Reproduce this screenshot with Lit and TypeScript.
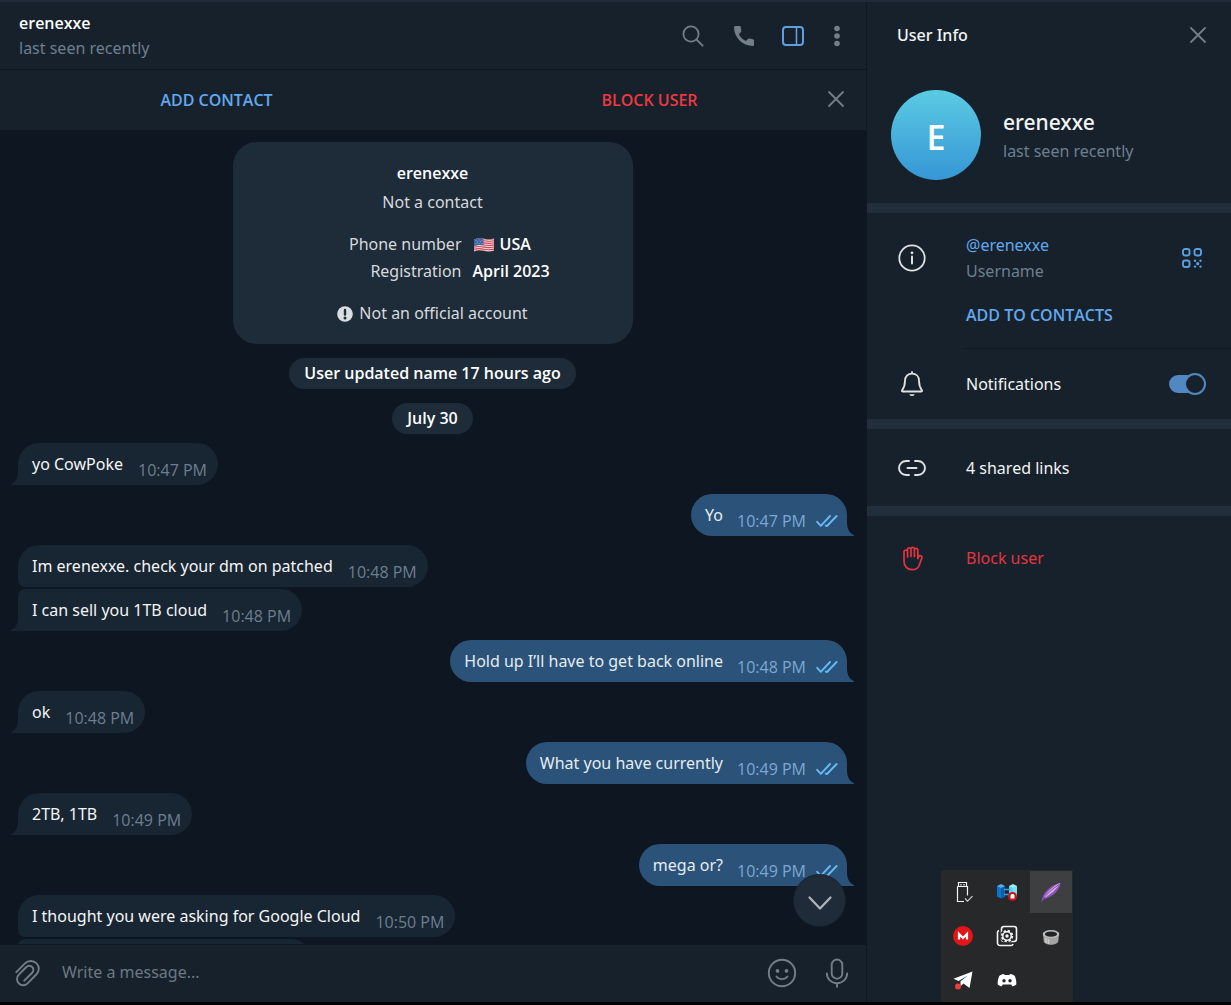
import { LitElement, html, css, svg, nothing } from "lit";
import { customElement, property } from "lit/decorators.js";
import { classMap } from "lit/directives/class-map.js";

type Message = {
  text: string;
  time: string;
  out?: boolean;
  joinsNext?: boolean;
  joinsPrev?: boolean;
};

const MESSAGES: Message[] = [
  { text: "yo CowPoke", time: "10:47 PM" },
  { text: "Yo", time: "10:47 PM", out: true },
  { text: "Im erenexxe. check your dm on patched", time: "10:48 PM", joinsNext: true },
  { text: "I can sell you 1TB cloud", time: "10:48 PM", joinsPrev: true },
  { text: "Hold up I’ll have to get back online", time: "10:48 PM", out: true },
  { text: "ok", time: "10:48 PM" },
  { text: "What you have currently", time: "10:49 PM", out: true },
  { text: "2TB, 1TB", time: "10:49 PM" },
  { text: "mega or?", time: "10:49 PM", out: true },
  { text: "I thought you were asking for Google Cloud", time: "10:50 PM", joinsNext: true },
];

const icon = (w: number, h: number, body: unknown) => html`
  <svg width=${w} height=${h} viewBox="0 0 ${w} ${h}" fill="none" stroke="currentColor"
    stroke-width="2" stroke-linecap="round" stroke-linejoin="round" aria-hidden="true">${body}</svg>`;

const searchIcon = icon(24, 24, svg`
  <circle cx="10" cy="10" r="7.6" stroke-width="1.8"/><path d="M15.6 15.6l6 6"/>`);
const phoneIcon = icon(24, 24, svg`
  <path fill="currentColor" stroke="none" d="M3.6 2h3.800c.7 0 1.200.5 1.300 1.100l.6 3.700c.1.500-.1 1-.4 1.300L6.900 10.200c1.500 3 3.900 5.400 6.900 6.900l2.100-2.100c.4-.4.9-.5 1.400-.4l3.600.7c.7.1 1.100.7 1.100 1.300v4.100c0 .700-.6 1.300-1.300 1.300C10.600 22 2 13.400 2 3.300 2 2.600 2.900 2 3.600 2z"/>`);
const panelIcon = icon(24, 22, svg`
  <rect x="2" y="2" width="20" height="18" rx="3"/><path d="M15.500 2v18" stroke-width="1.600"/>`);
const dotsIcon = icon(6, 22, svg`
  <g fill="currentColor" stroke="none"><circle cx="3" cy="3.500" r="2.800"/><circle cx="3" cy="11" r="2.800"/><circle cx="3" cy="18.500" r="2.800"/></g>`);
const closeIcon = icon(18, 18, svg`<path d="M2 2l14 14M16 2L2 16" stroke-width="1.800"/>`);
const clipIcon = icon(26, 28, svg`
  <path stroke-width="1.900" d="M2.300 13.200L11 4.400a8.100 8.100 0 0 1 11.500 0 7.600 7.600 0 0 1 0 10.900l-8.900 9a6 6 0 0 1-8.800 0 6.100 6.100 0 0 1 0-8.600l7.600-7.700a4 4 0 0 1 5.800 0 4 4 0 0 1 0 5.700l-7.900 8"/>`);
const smileIcon = icon(30, 30, svg`
  <circle cx="15" cy="15" r="13.200" stroke-width="1.900"/>
  <circle cx="10.500" cy="12.900" r="1.900" fill="currentColor" stroke="none"/>
  <circle cx="19.500" cy="12.900" r="1.900" fill="currentColor" stroke="none"/>
  <path d="M9.500 18.500c2.600 3.500 8.400 3.500 11 0" stroke-width="1.800"/>`);
const micIcon = icon(24, 30, svg`
  <rect x="6.700" y="1.500" width="10.600" height="19.200" rx="5.300" stroke-width="1.900"/>
  <path d="M1.900 15.500a10.100 9.700 0 0 0 20.200 0M12 25.200v3.500" stroke-width="1.900"/>`);
const downIcon = icon(26, 16, svg`<path d="M2.500 2.500L13 13.500 23.500 2.500" stroke-width="2.200"/>`);
const infoIcon = icon(28, 28, svg`
  <circle cx="14" cy="14" r="12.700" stroke-width="1.800"/>
  <path d="M14 12.500v7" stroke-width="2"/><circle cx="14" cy="8.800" r="1.400" fill="currentColor" stroke="none"/>`);
const bellIcon = icon(24, 28, svg`
  <path stroke-width="1.800" d="M12 2v1.700M12 3.700c-4.200 0-7 3-7 7.100 0 5.100-1.100 7.100-3 9.700-.3.500-.1 1 .500 1h19c.600 0 .8-.5.5-1-1.900-2.600-3-4.600-3-9.700 0-4.100-2.800-7.100-7-7.100z"/>
  <path d="M9.300 24.200h5.400a2.900 2.900 0 0 1-5.400 0z" fill="currentColor" stroke="none"/>`);
const linkIcon = icon(28, 18, svg`
  <path d="M11 2H8a7 7 0 0 0 0 14h3M17 2h3a7 7 0 0 1 0 14h-3M9.500 9h9" stroke-width="1.900"/>`);
const handIcon = icon(22, 26, svg`
  <path stroke-width="1.700" d="M2 16V6.400a1.900 1.900 0 0 1 3.600 0V12M5.600 6.400V4a1.900 1.900 0 0 1 3.400 0v7.500M9 3.500a1.800 1.800 0 0 1 3.400 0v8M12.400 4.500a1.800 1.800 0 0 1 3.400 0v8.300M15.800 13.500l1.100-2.200c.9-1.300 3.400-.7 3 1.400l-2.700 7.500C16 23.300 13.600 24.700 10.300 24.700 5.300 24.700 2 21.500 2 16"/>`);
const qrIcon = icon(20, 20, svg`
  <g stroke-width="1.900"><rect x="1" y="1" width="6.500" height="6.500" rx="2"/><rect x="12.500" y="1" width="6.500" height="6.500" rx="2"/><rect x="1" y="12.500" width="6.500" height="6.500" rx="2"/></g>
  <g fill="currentColor" stroke="none"><circle cx="13" cy="12.800" r="1.200"/><circle cx="18.500" cy="12.800" r="1.200"/><circle cx="15.700" cy="15.700" r="1.600"/><circle cx="13" cy="18.600" r="1.200"/><circle cx="18.500" cy="18.600" r="1.200"/></g>`);
const checksIcon = icon(22, 14, svg`
  <path d="M1.200 7.800L4.800 11.800 14 2M9.800 11.600L11 12 20.600 2" stroke-width="1.900"/>`);
const flagIcon = html`
  <svg class="flag" width="22" height="16" viewBox="0 0 22 16" aria-hidden="true">
    <defs><clipPath id="wave"><path d="M1 2.500C5 .8 8 1 11 1.800s6 1 10-.3v12c-4 1.300-7 1.100-10 .3s-6-1-10 .7z"/></clipPath></defs>
    <g clip-path="url(#wave)">
      <rect width="22" height="16" fill="#f1dfe2"/>
      <g fill="none" stroke="#cf4455" stroke-width="1.100">
        ${[1.4, 3.5, 5.600, 7.700, 9.800, 11.900, 14].map(
          (y) => svg`<path d="M0 ${y + 0.5}C5 ${y - 0.7} 8 ${y - 0.4} 11 ${y + 0.3}s6 .8 11-.3"/>`
        )}
      </g>
      <path d="M0 0h10.500v8.300C7 7.500 4 7.800 0 9.500z" fill="#3c62a5"/>
      <g fill="#b9cae6"><circle cx="3" cy="3.500" r=".5"/><circle cx="6" cy="3" r=".5"/><circle cx="9" cy="3.200" r=".5"/><circle cx="4.500" cy="5" r=".5"/><circle cx="7.500" cy="4.800" r=".5"/><circle cx="3" cy="6.700" r=".5"/><circle cx="6" cy="6.300" r=".5"/><circle cx="9" cy="6.400" r=".5"/></g>
    </g>
  </svg>`;
const warnIcon = html`
  <svg width="16" height="16" viewBox="0 0 16 16" aria-hidden="true">
    <circle cx="8" cy="8" r="7.800" fill="#dadee2"/>
    <path d="M8 4v4.500" stroke="#1e2c3a" stroke-width="2.400" stroke-linecap="round"/>
    <circle cx="8" cy="11.900" r="1.500" fill="#1e2c3a"/>
  </svg>`;

const tray = (body: unknown) => html`<svg width="24" height="24" viewBox="0 0 24 24" fill="none" aria-hidden="true">${body}</svg>`;
const TRAY = [
  { name: "Safely remove hardware", art: tray(svg`
    <path d="M7.500 6.500V2.500h8v4M6.500 6.500h10v9M6.500 6.500v15h6.500" stroke="#f4f4f4" stroke-width="1.200"/>
    <path d="M10 4v1.500M13 4v1.500" stroke="#f4f4f4" stroke-width="1.200"/>
    <path d="M14 18.500l2.500 2.700 5-5" stroke="#d0d0d0" stroke-width="1.200"/>`) },
  { name: "Backup", art: tray(svg`
    <path d="M2 6v10.500l4 2 4-2V6z" fill="#0c74cf"/><path d="M6 8v10.500l4-2V6z" fill="#0a5fb5"/><path d="M2 6l4-2 4 2-4 2z" fill="#5aa9ee"/>
    <path d="M14 6v10.500l4 2 4-2V6z" fill="#5cd3f2"/><path d="M14 6l4-2 4 2-4 2z" fill="#a4edfb"/><path d="M18 8v9l4-1V6z" fill="#7fe0f6"/>
    <path d="M9 9.500h6M9 14.500h6" stroke="#3aa0d8" stroke-width="1.300"/>
    <circle cx="17.500" cy="16.500" r="4.500" fill="#c4161c"/><path d="M15.500 18.500v-2.500c0-2.600 4-2.600 4 0v2.500z" fill="#fff"/>`) },
  { name: "Feather", art: tray(svg`
    <path d="M2.500 21.500C3.500 13 10 6 21.500 2.500 21 9 16 16 5.500 19z" fill="#8d52b8"/>
    <path d="M5 17C9 11 14 6 21 3c-3 6-9 11-14.500 14.500z" fill="#d7b0ea"/>
    <path d="M2.500 21.500C7 14.500 13 9 20 4.500" stroke="#7d46a8" stroke-width="1"/>`), active: true },
  { name: "Mega", art: tray(svg`
    <circle cx="12" cy="12" r="10" fill="#e4141b"/><path d="M8 15.500V10l4 4 4-4v5.500" stroke="#fff" stroke-width="2.200"/>`) },
  { name: "Capture settings", art: tray(svg`
    <rect x="6.500" y="2.500" width="15" height="15" rx="2.500" stroke="#f4f4f4" stroke-width="1.600"/>
    <path d="M4 6.500A2 2 0 0 0 2.500 8.500V19A2.500 2.500 0 0 0 5 21.500h11a2 2 0 0 0 2-1.500" stroke="#f4f4f4" stroke-width="1.600"/>
    <circle cx="12" cy="12" r="7" fill="#262829"/>
    <circle cx="12" cy="12" r="5.200" stroke="#f4f4f4" stroke-width="2" stroke-dasharray="2.300 1.784"/>
    <circle cx="12" cy="12" r="4.200" stroke="#f4f4f4" stroke-width="1.500"/><circle cx="12" cy="12" r="1.700" fill="#f4f4f4"/>`) },
  { name: "Disk", art: tray(svg`
    <path d="M4 10l.7 7c.5 5 14.100 5 14.600 0L20 10z" fill="#a4a4a4"/><path d="M7 14v5M9.500 15v5" stroke="#cdcdcd" stroke-width="1.500"/>
    <ellipse cx="12" cy="10" rx="8.300" ry="4" fill="#bdbdbd"/><ellipse cx="12" cy="10.200" rx="6" ry="2.600" fill="#232323"/>`) },
  { name: "Messenger", art: tray(svg`
    <path d="M2.500 10.800L21.500 3.500 18.500 20l-6-4.500-3 2.800v-5L17 7.500 7.500 13z" fill="#fff"/>
    <circle cx="7" cy="18.500" r="3" fill="#ea4038"/>`) },
  { name: "Discord", art: tray(svg`
    <path d="M7.500 6.300L9 6l.7 1h4.600l.7-1 1.500.3c2 .500 3 1.200 3.500 2.200 1 2.500 1.500 5 1.300 8-1.500 1.200-3 1.700-4 1.800l-1.100-1.700H7.800L6.700 18.300c-1-.1-2.500-.6-4-1.800-.2-3 .3-5.500 1.300-8 .5-1 1.500-1.700 3.500-2.200z" fill="#fff"/>
    <circle cx="9" cy="12.700" r="1.700" fill="#26282a"/><circle cx="15" cy="12.700" r="1.700" fill="#26282a"/>`) },
];

const shared = css`
  * { box-sizing: border-box; }
  button, input { font: inherit; color: inherit; background: none; border: 0; margin: 0; padding: 0; }
  button { cursor: pointer; display: flex; align-items: center; justify-content: center; }
  svg { display: block; flex: none; }
  h1, h2, p, dl, dd, dt { margin: 0; font-size: inherit; font-weight: inherit; }
  .strong { font-family: "Open Sans", "Noto Sans", sans-serif; font-weight: 600; }
`;

@customElement("chat-bubble")
export class ChatBubble extends LitElement {
  @property({ attribute: false }) message!: Message;

  static styles = [shared, css`
    :host { display: flex; }
    .bubble {
      position: relative; display: flex; align-items: flex-start; gap: 15px; height: 42px;
      padding: 0 11px 0 14px; line-height: 42px; border-radius: 21px;
      background: #182533; color: #f5f5f5; white-space: nowrap;
    }
    .time { font-family: "Open Sans", "Noto Sans", sans-serif; color: #6d7f8f; padding-top: 6px; height: 42px; }
    .bubble.in { border-bottom-left-radius: 0; }
    .bubble.joins-next { border-bottom-left-radius: 7px; }
    .bubble.joins-prev { border-top-left-radius: 7px; }
    .bubble.out { gap: 14px; margin-left: auto; background: #2b5278; color: #e4ecf2; border-bottom-right-radius: 0; padding-right: 9px; }
    .out .time { color: #7da8d3; }
    .checks { color: #65b9f4; margin-left: -4px; padding-top: 20px; }
    .tail { position: absolute; bottom: 0; left: -7px; color: #182533; }
    .out .tail { left: auto; right: -7px; color: #2b5278; transform: scaleX(-1); }
  `];

  render() {
    const m = this.message;
    return html`
      <div class=${classMap({ bubble: true, in: !m.out, out: !!m.out, "joins-next": !!m.joinsNext, "joins-prev": !!m.joinsPrev })}>
        <span>${m.text}</span>
        <time class="time">${m.time}</time>
        ${m.out ? html`<span class="checks">${checksIcon}</span>` : nothing}
        ${m.joinsNext ? nothing : html`
          <svg class="tail" width="8" height="14" viewBox="0 0 8 14" aria-hidden="true">
            <path d="M8 0H7C7 7 4.500 11 0 13.300V14h8z" fill="currentColor"/>
          </svg>`}
      </div>`;
  }
}

@customElement("user-info")
export class UserInfo extends LitElement {
  static styles = [shared, css`
    :host { display: flex; flex-direction: column; background: #17212b; color: #f2f4f5; }
    .title { display: flex; align-items: center; justify-content: space-between; height: 68px; padding: 0 24px 2px 30px; font-weight: 500; }
    .close { color: #727e88; }
    .profile { display: flex; align-items: center; gap: 22px; padding: 20px 24px 23px; }
    .avatar {
      width: 90px; height: 90px; border-radius: 50%; display: grid; place-items: center; padding-top: 3px;
      background: linear-gradient(#5bcbe3, #3596d5); color: #fff; font-size: 34px; line-height: 40px;
    }
    .name { font-size: 21px; line-height: 30px; padding-top: 2px; font-weight: 500; }
    .muted { color: #6d7f8f; }
    .profile .muted { line-height: 28px; }
    .band { height: 10px; background: #232e3c; flex: none; }
    .row { display: grid; grid-template-columns: 44px 1fr auto; column-gap: 31px; align-items: center; padding: 0 24px; }
    .glyph { display: grid; place-items: center; width: 42px; color: #dfe2e4; }
    .user { padding-top: 19px; }
    .lines { line-height: 26px; }
    .link { display: block; color: #62a8ee; text-decoration: none; }
    .qr { color: #5a9fe0; padding: 0 5px; }
    .add { color: #62a8ee; margin: 18px 0 20px 99px; align-self: flex-start; line-height: 26px; }
    .rule { height: 1px; background: #101921; margin-left: 96px; flex: none; }
    .notify { height: 70px; padding-right: 25px; }
    .links { height: 77px; }
    .block { height: 84px; color: #e5343f; width: 100%; text-align: left; }
    .block .glyph { color: inherit; width: 44px; }
    .toggle { position: relative; display: block; appearance: none; width: 37px; height: 22px; cursor: pointer; }
    .toggle::before { content: ""; position: absolute; inset: 2px 10px 2px 0; border-radius: 9px; background: #6d7f8f; }
    .toggle::after {
      content: ""; position: absolute; left: 0; top: 0; width: 22px; height: 22px; box-sizing: border-box;
      border-radius: 50%; border: 2px solid #6d7f8f; background: #17212b;
    }
    .toggle:checked::before { background: #5288c1; }
    .toggle:checked::after { left: auto; right: 0; border-color: #5288c1; }
  `];

  render() {
    return html`
      <div class="title"><h2>User Info</h2><button class="close" aria-label="Close">${closeIcon}</button></div>
      <div class="profile">
        <div class="avatar strong">E</div>
        <div><p class="name">erenexxe</p><p class="muted">last seen recently</p></div>
      </div>
      <div class="band"></div>
      <div class="row user">
        <span class="glyph">${infoIcon}</span>
        <div class="lines"><a class="link" href="#erenexxe">@erenexxe</a><span class="muted">Username</span></div>
        <button class="qr" aria-label="QR code">${qrIcon}</button>
      </div>
      <button class="add strong">ADD TO CONTACTS</button>
      <div class="rule"></div>
      <div class="row notify">
        <span class="glyph">${bellIcon}</span>
        <label for="notify">Notifications</label>
        <input id="notify" class="toggle" type="checkbox" role="switch" checked />
      </div>
      <div class="band"></div>
      <div class="row links"><span class="glyph">${linkIcon}</span><span>4 shared links</span></div>
      <div class="band"></div>
      <button class="row block"><span class="glyph">${handIcon}</span><span>Block user</span></button>`;
  }
}

@customElement("app-root")
export class AppRoot extends LitElement {
  static styles = [shared, css`
    :host {
      position: relative; display: grid; grid-template-columns: minmax(0, 1fr) 364px; column-gap: 1px;
      height: 100vh; box-sizing: border-box; overflow: hidden;
      border-top: 2px solid #212c38; border-bottom: 3px solid #000; background: #0f1820;
      font-family: "Noto Sans", "Open Sans", sans-serif; font-size: 16px; line-height: 24px; color: #f5f5f5;
    }
    .chat { display: flex; flex-direction: column; min-height: 0; background: #0e1621; }
    .top { display: flex; align-items: center; height: 68px; padding: 1px 26px 0 19px; background: #17212b; border-bottom: 1px solid #101921; color: #727e88; flex: none; }
    .who { flex: 1; line-height: 25px; }
    .peer, .card .strong, .pill { color: #fff; }
    .muted { color: #6d7f8f; }
    .tools { display: flex; align-items: center; gap: 27px; }
    .on { color: #5d9fe0; margin: 0 2px 0 -2px; }
    .actions { display: grid; grid-template-columns: 1fr 1fr; height: 60px; position: relative; flex: none; background: #17212b; }
    .actions button { line-height: 60px; }
    .add { color: #62a8ee; }
    .ban { color: #ec3942; }
    .dismiss { position: absolute; right: 21px; top: 20px; color: #727e88; }
    .history { flex: 1; min-height: 0; overflow: hidden; position: relative; display: flex; flex-direction: column; padding: 12px 19px 0 18px; }
    .card { width: 400px; flex: none; align-self: center; margin-bottom: 14px; padding: 17px 0; border-radius: 24px; background: #1e2b38; text-align: center; line-height: 27px; color: #d6dade; }
    .card .head { line-height: 29px; }
    .facts { display: grid; grid-template-columns: 229px 1fr; column-gap: 11px; margin: 14px 0 15px; text-align: left; }
    .facts dt { text-align: right; }
    .facts dd { display: flex; align-items: center; gap: 5px; }
    .official { display: flex; align-items: center; justify-content: center; gap: 6px; }
    .pill { flex: none; align-self: center; height: 31px; line-height: 31px; padding: 0 15px; border-radius: 16px; background: #1e2b38; margin-bottom: 14px; }
    .pill.date { margin-bottom: 9px; }
    chat-bubble { flex: none; margin-bottom: 9px; }
    chat-bubble.joined { margin-bottom: 2px; }
    .next { flex: none; width: 294px; height: 42px; border-radius: 7px 21px 21px 7px; background: #182533; }
    .down { position: absolute; right: 20px; bottom: 17px; width: 53px; height: 53px; padding-top: 4px; border-radius: 50%; background: #1f2b38; border: 1px solid #17212b; color: #b0b5ba; }
    .compose { display: flex; align-items: center; height: 58px; flex: none; padding: 0 17px 1px 14px; background: #17212b; border-top: 1px solid #0f1820; color: #727e88; }
    .field { flex: 1; min-width: 0; margin: 0 26px 2px 22px; outline: 0; color: #f5f5f5; height: 26px; }
    .field::placeholder { color: #6c7883; opacity: 1; }
    .compose .mic { margin-left: 28px; }
    .tray { position: absolute; right: 158px; bottom: 0; display: grid; grid-template-columns: repeat(3, 44px); grid-auto-rows: 44px; background: #262829; }
    .tray button { border: 1px solid #262829; }
    .tray .active { background: #3d3f40; }
  `];

  render() {
    return html`
      <main class="chat">
        <header class="top">
          <div class="who"><h1 class="peer strong">erenexxe</h1><p class="muted">last seen recently</p></div>
          <div class="tools">
            <button aria-label="Search">${searchIcon}</button>
            <button aria-label="Call">${phoneIcon}</button>
            <button class="on" aria-label="Toggle user info">${panelIcon}</button>
            <button aria-label="More">${dotsIcon}</button>
          </div>
        </header>
        <div class="actions">
          <button class="add strong">ADD CONTACT</button>
          <button class="ban strong">BLOCK USER</button>
          <button class="dismiss" aria-label="Dismiss">${closeIcon}</button>
        </div>
        <section class="history">
          <div class="card">
            <p class="head strong">erenexxe</p>
            <p class="head">Not a contact</p>
            <dl class="facts">
              <dt>Phone number</dt><dd class="strong">${flagIcon}USA</dd>
              <dt>Registration</dt><dd class="strong">April 2023</dd>
            </dl>
            <p class="official">${warnIcon}Not an official account</p>
          </div>
          <div class="pill strong">User updated name 17 hours ago</div>
          <div class="pill date strong">July 30</div>
          ${MESSAGES.map((m) => html`<chat-bubble class=${m.joinsNext ? "joined" : ""} .message=${m}></chat-bubble>`)}
          <div class="next"></div>
          <button class="down" aria-label="Scroll to bottom">${downIcon}</button>
        </section>
        <form class="compose">
          <button type="button" aria-label="Attach">${clipIcon}</button>
          <input class="field" type="text" placeholder="Write a message..." aria-label="Write a message" />
          <button type="button" aria-label="Emoji">${smileIcon}</button>
          <button type="button" class="mic" aria-label="Record voice">${micIcon}</button>
        </form>
      </main>
      <user-info></user-info>
      <div class="tray">
        ${TRAY.map((t) => html`<button class=${t.active ? "active" : ""} aria-label=${t.name}>${t.art}</button>`)}
      </div>`;
  }
}
